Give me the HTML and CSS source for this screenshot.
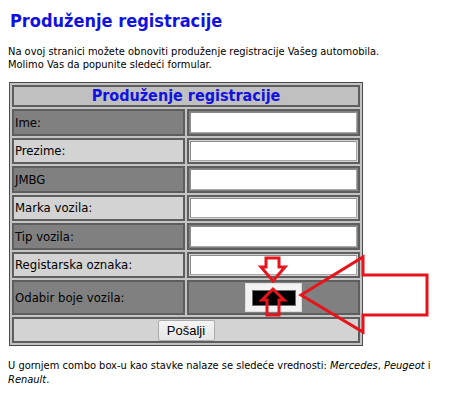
FILE: index.html
```html
<!DOCTYPE html>
<html lang="sr">
<head>
<meta charset="utf-8">
<title>Produženje registracije</title>
<link rel="stylesheet" href="styles.css">
</head>
<body>
<h1 class="title">Produženje registracije</h1>
<p class="intro">Na ovoj stranici možete obnoviti produženje registracije Vašeg automobila.<br>Molimo Vas da popunite sledeći formular.</p>
<form class="reg-form">
<table class="reg-table">
  <tr><th colspan="2" class="head">Produženje registracije</th></tr>
  <tr class="dark"><td class="label">Ime:</td><td class="field"><input class="text-input" type="text"></td></tr>
  <tr class="light"><td class="label">Prezime:</td><td class="field"><input class="text-input" type="text"></td></tr>
  <tr class="dark"><td class="label">JMBG</td><td class="field"><input class="text-input" type="text"></td></tr>
  <tr class="light"><td class="label">Marka vozila:</td><td class="field"><input class="text-input" type="text"></td></tr>
  <tr class="dark"><td class="label">Tip vozila:</td><td class="field"><input class="text-input" type="text"></td></tr>
  <tr class="light"><td class="label">Registarska oznaka:</td><td class="field"><input class="text-input" type="text"></td></tr>
  <tr class="dark tall"><td class="label">Odabir boje vozila:</td><td class="field center"><span class="color-select"><span class="swatch"></span></span></td></tr>
  <tr class="light"><td colspan="2" class="submit-cell"><button type="button" class="submit-btn">Pošalji</button></td></tr>
</table>
</form>
<p class="note">U gornjem combo box-u kao stavke nalaze se sledeće vrednosti: <em>Mercedes</em>, <em>Peugeot</em> i <em>Renault</em>.</p>
<svg class="overlay" width="474" height="404" viewBox="0 0 474 404" xmlns="http://www.w3.org/2000/svg">
  <g fill="none" stroke="#e8141c" stroke-width="3" stroke-linejoin="miter">
    <polygon points="266,258 279,258 279,267 285,267 273,281 261,267 266,267"/>
    <polygon points="273,289 284,300 279,300 279,315 267,315 267,300 262,300"/>
    <polygon points="301,295 363,257 363,275 427,275 427,315 363,315 363,332"/>
  </g>
</svg>
</body>
</html>
```
FILE: styles.css
```css
html, body {
  background: #ffffff;
}
body {
  margin: 8px;
  font-family: "DejaVu Sans Condensed", "DejaVu Sans", sans-serif;
  font-stretch: condensed;
  color: #000;
}
.title {
  margin: 2px 0 0 2px;
  font-size: 18px;
  line-height: 22px;
  font-weight: bold;
  color: #1212e0;
}
.intro {
  margin: 13px 0 0 0;
  font-size: 11px;
  line-height: 13px;
}
.reg-form {
  margin: 11px 0 0 1px;
}
.reg-table {
  width: 354px;
  border: 1px solid #4a4a4a;
  border-spacing: 2px;
  background: #c4c4c4;
}
.reg-table td,
.reg-table th {
  border: 2px solid #5e5e5e;
  padding: 0;
}
.reg-table .head {
  height: 18px;
  background: #c0c0c0;
  color: #1212e0;
  font-size: 16px;
  line-height: 18px;
  font-weight: bold;
  text-align: center;
}
.reg-table .dark td { background: #808080; }
.reg-table .light td { background: #d3d3d3; }
.reg-table .label {
  width: 50%;
  font-size: 13px;
  padding-left: 1px;
  vertical-align: middle;
}
.reg-table .field {
  padding: 1px;
}
.text-input {
  display: block;
  box-sizing: border-box;
  width: 100%;
  height: 20.5px;
  margin: 0;
  border: 1px solid #a8a8a8;
  border-top-color: #8c8c8c;
  border-left-color: #8c8c8c;
  background: #fff;
}
.reg-table .tall td { height: 29px; }
.reg-table .center { text-align: center; }
.color-select {
  display: inline-block;
  vertical-align: middle;
  padding: 6px 5px 5px 6px;
  background: #f3f3f3;
  border: 1px solid #dddddd;
  line-height: 0;
}
.swatch {
  display: inline-block;
  width: 42px;
  height: 14px;
  background: #000;
  border: 1px solid #707070;
}
.reg-table .submit-cell {
  text-align: center;
  height: 22px;
}
.submit-btn {
  display: inline-block;
  vertical-align: middle;
  width: 57px;
  height: 21px;
  margin: 0;
  padding: 0;
  border: 1px solid #acacac;
  border-radius: 2px;
  background: linear-gradient(#f5f5f5, #e6e6e6);
  font-family: "Liberation Sans", Arial, sans-serif;
  font-size: 13px;
  color: #000;
}
.note {
  margin: 13px 0 0 0;
  font-size: 11px;
  line-height: 14px;
}
.overlay {
  position: absolute;
  left: 0;
  top: 0;
  pointer-events: none;
}
```
